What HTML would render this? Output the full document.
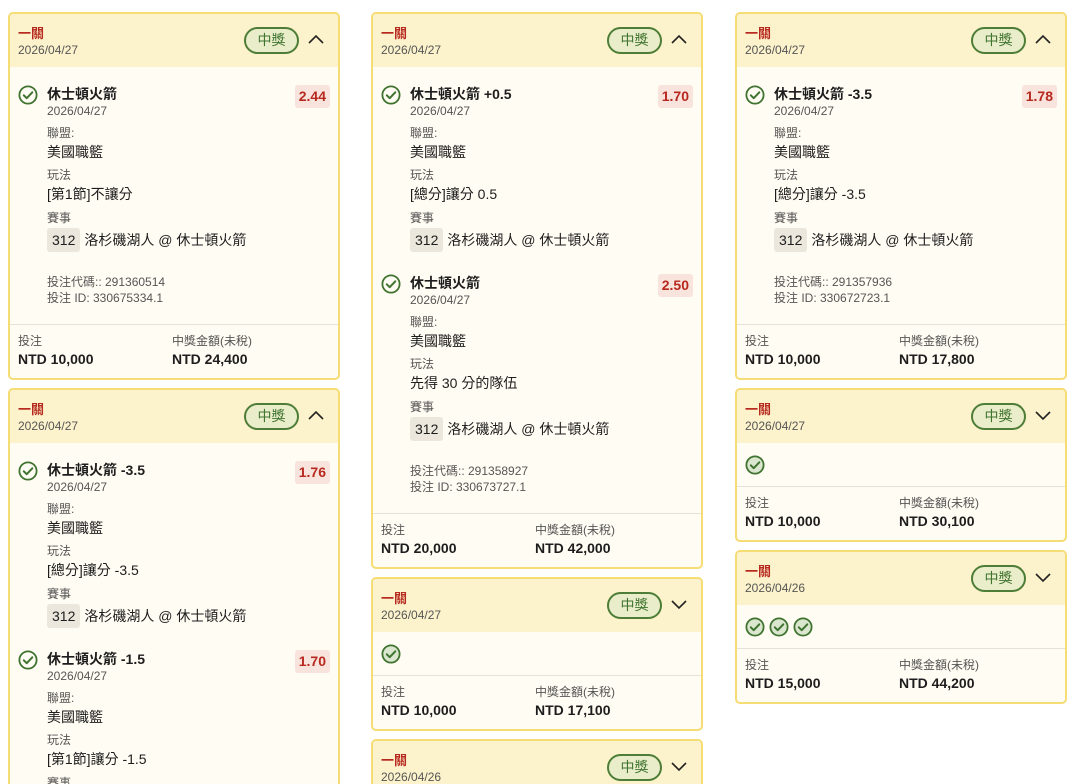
<!DOCTYPE html>
<html><head><meta charset="utf-8">
<style>
*{box-sizing:border-box;margin:0;padding:0}
html,body{width:1080px;height:784px;overflow:hidden}
body{background:#fff;font-family:"Liberation Sans","Noto Sans CJK TC",sans-serif;color:#1d1d1d;position:relative}
.col{position:absolute;top:12px;width:332px;max-height:772px;overflow:hidden}
.card{border:2px solid #f5dc74;border-radius:5px;background:#fffcf3;margin-bottom:8px;overflow:hidden}
.hd{height:53px;background:#fcf3cc;position:relative;padding:12px 0 0 8px}
.hd .t{color:#b7281e;font-weight:bold;font-size:13px;line-height:16px}
.hd .d{color:#555;font-size:12px;line-height:16px}
.badge{position:absolute;left:234px;top:13px;width:55px;height:27px;border:2px solid #4d7d36;border-radius:14px;background:#e9edc9;color:#3f7330;font-size:14px;text-align:center;line-height:23px}
.chev{position:absolute;left:297px;top:18px;width:18px;height:14px}
.body{padding:17px 8px 18px 8px;border-bottom:1px solid #e6e2d6}
.leg{position:relative;padding-left:29px;margin-bottom:22px}
.leg:last-of-type{margin-bottom:0}
.ck{position:absolute;left:0;top:0}
.leg .n{font-weight:bold;font-size:14px;line-height:18px;margin-top:1px}
.leg .dt{font-size:12px;color:#555;line-height:16px}
.leg .lb{font-size:12px;color:#555;line-height:16px;margin-top:6px}
.leg .lb.m{margin-top:7px}
.leg .v{font-size:14px;line-height:18px;margin-top:2px}
.leg .mt{font-size:14px;line-height:24px;margin-top:2px}
.num{display:inline-block;background:#ebe7dc;border-radius:3px;padding:0 5px;margin-right:4px}
.odds{position:absolute;right:0;top:0;background:#f8e4dd;color:#b7281e;font-weight:bold;font-size:14px;line-height:23px;padding:0 4px;border-radius:3px}
.codes{padding-left:29px;font-size:12px;color:#555;line-height:16px;margin-top:21px}
.ft{display:flex;padding:8px 8px 9px}
.ft div{width:154px}
.ft .l{font-size:12px;color:#555;line-height:16px}
.ft .a{font-weight:bold;font-size:14px;line-height:20px}
.cb{padding:12px 8px 11px;border-bottom:1px solid #e6e2d6;height:44px}
.cb svg{margin-right:4px}
</style></head><body>
<svg width="0" height="0" style="position:absolute"><defs>
<symbol id="c" viewBox="0 0 20 20"><circle cx="10" cy="10" r="8.6" fill="#dbe6cf" stroke="#3f7330" stroke-width="1.8"/><path d="M5.8 10.3l2.9 2.9 5.6-5.9" fill="none" stroke="#3f7330" stroke-width="2" stroke-linecap="round" stroke-linejoin="round"/></symbol>
<symbol id="c2" viewBox="0 0 20 20"><circle cx="10" cy="10" r="8.6" fill="none" stroke="#3f7330" stroke-width="1.8"/><path d="M5.8 10.3l2.9 2.9 5.6-5.9" fill="none" stroke="#3f7330" stroke-width="2" stroke-linecap="round" stroke-linejoin="round"/></symbol>
<symbol id="up" viewBox="0 0 18 14"><path d="M2 11l7-7 7 7" fill="none" stroke="#222" stroke-width="1.6"/></symbol>
<symbol id="dn" viewBox="0 0 18 14"><path d="M2 4l7 7 7-7" fill="none" stroke="#222" stroke-width="1.6"/></symbol>
</defs></svg>

<div class="col" style="left:8px">
 <div class="card">
  <div class="hd"><div class="t">一關</div><div class="d">2026/04/27</div><div class="badge">中獎</div><svg class="chev"><use href="#up"/></svg></div>
  <div class="body">
   <div class="leg"><svg class="ck" width="20" height="20"><use href="#c2"/></svg><span class="odds">2.44</span>
    <div class="n">休士頓火箭</div><div class="dt">2026/04/27</div>
    <div class="lb">聯盟:</div><div class="v">美國職籃</div>
    <div class="lb">玩法</div><div class="v">[第1節]不讓分</div>
    <div class="lb m">賽事</div><div class="mt"><span class="num">312</span>洛杉磯湖人 @ 休士頓火箭</div></div>
   <div class="codes">投注代碼:: 291360514<br>投注 ID: 330675334.1</div>
  </div>
  <div class="ft"><div><div class="l">投注</div><div class="a">NTD 10,000</div></div><div><div class="l">中獎金額(未稅)</div><div class="a">NTD 24,400</div></div></div>
 </div>
 <div class="card">
  <div class="hd"><div class="t">一關</div><div class="d">2026/04/27</div><div class="badge">中獎</div><svg class="chev"><use href="#up"/></svg></div>
  <div class="body">
   <div class="leg"><svg class="ck" width="20" height="20"><use href="#c2"/></svg><span class="odds">1.76</span>
    <div class="n">休士頓火箭 -3.5</div><div class="dt">2026/04/27</div>
    <div class="lb">聯盟:</div><div class="v">美國職籃</div>
    <div class="lb">玩法</div><div class="v">[總分]讓分 -3.5</div>
    <div class="lb m">賽事</div><div class="mt"><span class="num">312</span>洛杉磯湖人 @ 休士頓火箭</div></div>
   <div class="leg"><svg class="ck" width="20" height="20"><use href="#c2"/></svg><span class="odds">1.70</span>
    <div class="n">休士頓火箭 -1.5</div><div class="dt">2026/04/27</div>
    <div class="lb">聯盟:</div><div class="v">美國職籃</div>
    <div class="lb">玩法</div><div class="v">[第1節]讓分 -1.5</div>
    <div class="lb m">賽事</div><div class="mt"><span class="num">312</span>洛杉磯湖人 @ 休士頓火箭</div></div>
  </div>
 </div>
</div>

<div class="col" style="left:371px">
 <div class="card">
  <div class="hd"><div class="t">一關</div><div class="d">2026/04/27</div><div class="badge">中獎</div><svg class="chev"><use href="#up"/></svg></div>
  <div class="body">
   <div class="leg"><svg class="ck" width="20" height="20"><use href="#c2"/></svg><span class="odds">1.70</span>
    <div class="n">休士頓火箭 +0.5</div><div class="dt">2026/04/27</div>
    <div class="lb">聯盟:</div><div class="v">美國職籃</div>
    <div class="lb">玩法</div><div class="v">[總分]讓分 0.5</div>
    <div class="lb m">賽事</div><div class="mt"><span class="num">312</span>洛杉磯湖人 @ 休士頓火箭</div></div>
   <div class="leg"><svg class="ck" width="20" height="20"><use href="#c2"/></svg><span class="odds">2.50</span>
    <div class="n">休士頓火箭</div><div class="dt">2026/04/27</div>
    <div class="lb">聯盟:</div><div class="v">美國職籃</div>
    <div class="lb">玩法</div><div class="v">先得 30 分的隊伍</div>
    <div class="lb m">賽事</div><div class="mt"><span class="num">312</span>洛杉磯湖人 @ 休士頓火箭</div></div>
   <div class="codes">投注代碼:: 291358927<br>投注 ID: 330673727.1</div>
  </div>
  <div class="ft"><div><div class="l">投注</div><div class="a">NTD 20,000</div></div><div><div class="l">中獎金額(未稅)</div><div class="a">NTD 42,000</div></div></div>
 </div>
 <div class="card">
  <div class="hd"><div class="t">一關</div><div class="d">2026/04/27</div><div class="badge">中獎</div><svg class="chev"><use href="#dn"/></svg></div>
  <div class="cb"><svg width="20" height="20"><use href="#c"/></svg></div>
  <div class="ft"><div><div class="l">投注</div><div class="a">NTD 10,000</div></div><div><div class="l">中獎金額(未稅)</div><div class="a">NTD 17,100</div></div></div>
 </div>
 <div class="card">
  <div class="hd"><div class="t">一關</div><div class="d">2026/04/26</div><div class="badge">中獎</div><svg class="chev"><use href="#dn"/></svg></div>
  <div class="cb"></div>
 </div>
</div>

<div class="col" style="left:735px">
 <div class="card">
  <div class="hd"><div class="t">一關</div><div class="d">2026/04/27</div><div class="badge">中獎</div><svg class="chev"><use href="#up"/></svg></div>
  <div class="body">
   <div class="leg"><svg class="ck" width="20" height="20"><use href="#c2"/></svg><span class="odds">1.78</span>
    <div class="n">休士頓火箭 -3.5</div><div class="dt">2026/04/27</div>
    <div class="lb">聯盟:</div><div class="v">美國職籃</div>
    <div class="lb">玩法</div><div class="v">[總分]讓分 -3.5</div>
    <div class="lb m">賽事</div><div class="mt"><span class="num">312</span>洛杉磯湖人 @ 休士頓火箭</div></div>
   <div class="codes">投注代碼:: 291357936<br>投注 ID: 330672723.1</div>
  </div>
  <div class="ft"><div><div class="l">投注</div><div class="a">NTD 10,000</div></div><div><div class="l">中獎金額(未稅)</div><div class="a">NTD 17,800</div></div></div>
 </div>
 <div class="card">
  <div class="hd"><div class="t">一關</div><div class="d">2026/04/27</div><div class="badge">中獎</div><svg class="chev"><use href="#dn"/></svg></div>
  <div class="cb"><svg width="20" height="20"><use href="#c"/></svg></div>
  <div class="ft"><div><div class="l">投注</div><div class="a">NTD 10,000</div></div><div><div class="l">中獎金額(未稅)</div><div class="a">NTD 30,100</div></div></div>
 </div>
 <div class="card">
  <div class="hd"><div class="t">一關</div><div class="d">2026/04/26</div><div class="badge">中獎</div><svg class="chev"><use href="#dn"/></svg></div>
  <div class="cb"><svg width="20" height="20"><use href="#c"/></svg><svg width="20" height="20"><use href="#c"/></svg><svg width="20" height="20"><use href="#c"/></svg></div>
  <div class="ft"><div><div class="l">投注</div><div class="a">NTD 15,000</div></div><div><div class="l">中獎金額(未稅)</div><div class="a">NTD 44,200</div></div></div>
 </div>
</div>
</body></html>
